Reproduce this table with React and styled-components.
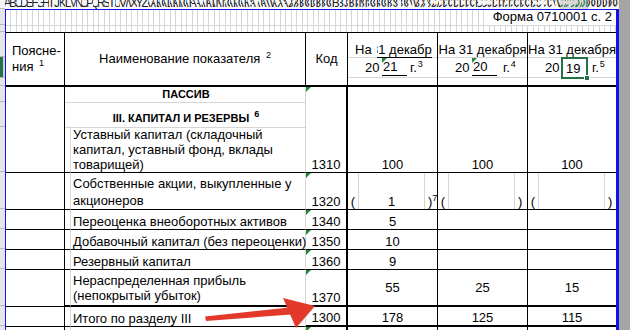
import React from "react";
import styled, { createGlobalStyle } from "styled-components";

const BLUE = "#1212e6";
const GRID = "#d6d6d6";
const GREEN = "#217346";
const MARK = "#1f8b3b";

const GlobalStyle = createGlobalStyle`
  html, body { margin: 0; padding: 0; background: #fff; }
  body { font-family: "Liberation Sans", Arial, sans-serif; }
`;

const line = (k) =>
  ({
    black: "1px solid #000",
    thick: "2px solid #000",
    grid: `1px solid ${GRID}`,
    none: "none",
  }[k || "black"]);

const Window = styled.div`
  position: relative;
  display: flex;
  width: 630px;
  height: 330px;
  overflow: hidden;
  background: #fff;
  color: #000;
  font-size: 13px;
`;

const RowHeads = styled.div`
  flex: none;
  width: 5px;
  display: flex;
  flex-direction: column;
  background: #e6e6e6;
`;

const RowHead = styled.div`
  flex: none;
  height: ${(p) => p.$h}px;
  box-sizing: border-box;
  border-bottom: 1px solid #b9b9b9;
  background: ${(p) => (p.$corner ? "#f3f3f3" : p.$active ? "#d2d2d2" : "#e6e6e6")};
  box-shadow: ${(p) => (p.$active ? `inset 3px 0 0 ${GREEN}` : "none")};
`;

const Main = styled.div`
  flex: none;
  width: 614px;
  display: flex;
  flex-direction: column;
`;

const ColHeads = styled.div`
  flex: none;
  height: 9px;
  display: flex;
  overflow: hidden;
  background: #f7f7f7;
`;

const ColHead = styled.div`
  flex: none;
  width: ${(p) => p.$w}px;
  display: flex;
  justify-content: center;
  overflow: hidden;
  font-size: 12px;
  line-height: 12px;
  color: ${(p) => (p.$active ? GREEN : "#222")};
  background: ${(p) => (p.$active ? "#d9d9d9" : "transparent")};

  span {
    margin-top: -3px;
    white-space: nowrap;
  }
`;

const Gutter = styled.div`
  flex: 1;
  background: #a5a5a5;
`;

const Sheet = styled.div`
  flex: 1;
  display: flex;
  flex-direction: column;
  border-top: 1px solid ${BLUE};
  border-left: 1px solid ${BLUE};
  border-right: 3px solid ${BLUE};
`;

const TopArea = styled.div`
  flex: none;
  height: 22px;
  display: flex;
  justify-content: flex-end;
  align-items: flex-start;
  background-image: linear-gradient(${GRID}, ${GRID}),
    repeating-linear-gradient(
      to right,
      transparent 0 4px,
      ${GRID} 4px 5px,
      transparent 5px 10px,
      ${GRID} 10px 11px
    );
  background-size: 100% 1px, auto;
  background-position: 0 15px, 0 0;
  background-repeat: no-repeat, repeat;
`;

const FormLabel = styled.div`
  height: 15px;
  line-height: 13px;
  padding: 0 4px 0 6px;
  background: #fff;
  white-space: nowrap;
`;

const Table = styled.div`
  display: grid;
  grid-template-columns: 59px 6px 235px 42px 90px 90px 88px;
  grid-template-rows: 54px 16px 25px 45px 37px 20px 20px 20px 37px 20px 20px;
  border-top: 1px solid #000;
`;

const Cell = styled.div`
  grid-column: span ${(p) => p.$cols || 1};
  grid-row: span ${(p) => p.$rows || 1};
  position: relative;
  box-sizing: border-box;
  min-width: 0;
  display: flex;
  flex-direction: column;
  justify-content: ${(p) =>
    ({ top: "flex-start", middle: "center", bottom: "flex-end" }[p.$v || "bottom"])};
  text-align: ${(p) => p.$align || "left"};
  line-height: ${(p) => p.$lh || 15}px;
  white-space: nowrap;
  border-right: ${(p) => line(p.$r)};
  border-bottom: ${(p) => line(p.$b)};
  background: #fff;
`;

const HeadCell = styled(Cell)`
  padding-left: ${(p) => p.$indent || 0}px;
`;

const NameCell = styled(Cell)`
  padding: 0 0 ${(p) => p.$padB || 0}px 2px;
  font-weight: ${(p) => (p.$bold ? 700 : 400)};
  font-size: ${(p) => (p.$bold ? 11 : 13)}px;
`;

const CodeCell = styled(Cell)`
  text-align: center;
`;

const ValueCell = styled(Cell)`
  text-align: center;
`;

const ParenCell = styled(Cell)`
  flex-direction: row;
  align-items: stretch;
`;

const ParenPart = styled.div`
  flex: ${(p) => (p.$grow ? 1 : "none")};
  width: ${(p) => (p.$grow ? "auto" : `${p.$w}px`)};
  box-sizing: border-box;
  display: flex;
  align-items: flex-end;
  justify-content: ${(p) => p.$justify || "center"};
  padding-left: ${(p) => p.$pl || 0}px;
  border-left: ${(p) => (p.$side === "left" ? line("grid") : "none")};
  border-right: ${(p) => (p.$side === "right" ? line("grid") : "none")};
`;

const Marker = styled.i`
  position: absolute;
  top: 0;
  left: 0;
  width: 0;
  height: 0;
  border-top: 5px solid ${MARK};
  border-right: 5px solid transparent;
`;

const Sup = styled.sup`
  font-size: 9px;
  line-height: 0;
  vertical-align: 5px;
  margin-left: ${(p) => (p.$gap === undefined ? 1 : p.$gap)}px;
`;

const DateLine = styled.div`
  flex: none;
  height: 25px;
  box-sizing: border-box;
  display: flex;
  align-items: flex-end;
  justify-content: ${(p) => (p.$center ? "center" : "flex-start")};
  padding-left: ${(p) => (p.$center ? 0 : 7)}px;
  border-bottom: 1px solid ${GRID};
`;

const OnWord = styled.span`
  flex: none;
  width: 22px;
`;

const ClipBox = styled.span`
  flex: none;
  width: 55px;
  display: flex;
  overflow: hidden;
  border-bottom: 1px solid #000;
  margin-bottom: -1px;

  span {
    flex: none;
    margin-left: -6px;
  }
`;

const YearLine = styled.div`
  flex: none;
  height: 20px;
  box-sizing: border-box;
  display: flex;
  align-items: stretch;
  padding-left: 17px;
  border-bottom: 1px solid ${GRID};
`;

const YearPrefix = styled.span`
  width: ${(p) => p.$w}px;
  display: flex;
  align-items: center;
`;

const YearBox = styled.span`
  position: relative;
  width: ${(p) => p.$w}px;
  box-sizing: border-box;
  display: flex;
  align-items: center;
  padding-left: ${(p) => (p.$selected ? 3 : 1)}px;
  border: ${(p) => (p.$selected ? `2px solid ${GREEN}` : "none")};
  border-bottom: ${(p) => (p.$selected ? `2px solid ${GREEN}` : "1px solid #000")};
  margin: ${(p) => (p.$selected ? "-1px 0 -2px" : "0 0 1px")};

  &::after {
    content: "";
    display: ${(p) => (p.$selected ? "block" : "none")};
    position: absolute;
    right: -4px;
    bottom: -4px;
    width: 4px;
    height: 4px;
    background: ${GREEN};
    border: 1px solid #fff;
  }
`;

const YearSuffix = styled.span`
  display: flex;
  align-items: center;
  padding-left: ${(p) => p.$gap}px;
`;

const ArrowLayer = styled.svg`
  position: absolute;
  left: 0;
  top: 0;
  pointer-events: none;
`;

const colName = (i) => {
  let s = "";
  let n = i + 1;
  while (n > 0) {
    const m = (n - 1) % 26;
    s = String.fromCharCode(65 + m) + s;
    n = Math.floor((n - 1) / 26);
  }
  return s;
};

const colHeads = [];
for (let i = 0, x = 5; x < 619; i++) {
  const w = i % 2 ? 6 : 5;
  colHeads.push({ label: colName(i), w, active: x >= 559 && x + w <= 590 });
  x += w;
}

const rowHeads = [
  { h: 16 }, { h: 7 }, { h: 25 }, { h: 21, active: true }, { h: 8 },
  { h: 16 }, { h: 25 }, { h: 45 }, { h: 37 }, { h: 20 }, { h: 20 },
  { h: 20 }, { h: 37 }, { h: 20 }, { h: 20 },
];

const dates = [
  { year: "21", clipped: true, note: "3", gap: 3, box: 25, mark: true },
  { year: "20", note: "4", gap: 6, box: 25, mark: true },
  { year: "19", note: "5", gap: 4, box: 27, selected: true },
];

const items = [
  {
    name: "Собственные акции, выкупленные у\nакционеров",
    code: "1320",
    lh: 17,
    paren: true,
  },
  { name: "Переоценка внеоборотных активов", code: "1340", values: ["5", "", ""] },
  { name: "Добавочный капитал (без переоценки)", code: "1350", values: ["10", "", ""] },
  { name: "Резервный капитал", code: "1360", values: ["9", "", ""] },
  {
    name: "Нераспределенная прибыль\n(непокрытый убыток)",
    code: "1370",
    values: ["55", "25", "15"],
    middle: true,
    bottom: "thick",
  },
  {
    name: "Итого по разделу III",
    code: "1300",
    values: ["178", "125", "115"],
    bottom: "thick",
    nameBottom: "black",
  },
  { name: "", code: "", values: ["", "", ""] },
];

const withBreaks = (text) =>
  text.split("\n").map((part, i) => (
    <React.Fragment key={i}>
      {i > 0 && <br />}
      {part}
    </React.Fragment>
  ));

const DateHead = ({ d, last }) => (
  <HeadCell $v="top" $b="thick" $r={last ? "none" : "black"}>
    {d.clipped ? (
      <DateLine>
        <OnWord>На</OnWord>
        <ClipBox>
          <span>31 декабря</span>
        </ClipBox>
      </DateLine>
    ) : (
      <DateLine $center>На 31 декабря</DateLine>
    )}
    <YearLine>
      <YearPrefix $w={d.selected ? 16 : 17}>20</YearPrefix>
      <YearBox $w={d.box} $selected={d.selected}>
        {d.mark && <Marker />}
        {d.year}
      </YearBox>
      <YearSuffix $gap={d.gap}>
        <span>
          г.<Sup>{d.note}</Sup>
        </span>
      </YearSuffix>
    </YearLine>
  </HeadCell>
);

const Parens = ({ value, note, last }) => (
  <ParenCell $r={last ? "none" : "black"}>
    <ParenPart $w={11} $side="right">(</ParenPart>
    <ParenPart $grow>{value}</ParenPart>
    <ParenPart $w={last ? 12 : 13} $side="left" $justify="flex-start" $pl={3}>
      <span>
        ){note && <Sup $gap={0}>{note}</Sup>}
      </span>
    </ParenPart>
  </ParenCell>
);

export default function App() {
  return (
    <>
      <GlobalStyle />
      <Window>
        <RowHeads>
          <RowHead $h={9} $corner />
          {rowHeads.map((r, i) => (
            <RowHead key={i} $h={r.h} $active={r.active} />
          ))}
        </RowHeads>

        <Main>
          <ColHeads>
            {colHeads.map((c, i) => (
              <ColHead key={i} $w={c.w} $active={c.active}>
                <span>{c.label}</span>
              </ColHead>
            ))}
          </ColHeads>

          <Sheet>
            <TopArea>
              <FormLabel>Форма 0710001 с. 2</FormLabel>
            </TopArea>

            <Table>
              <HeadCell $v="middle" $lh={16} $indent={6} $b="thick">
                Поясне-
                <br />
                <span>
                  ния <Sup $gap={2}>1</Sup>
                </span>
              </HeadCell>
              <HeadCell $cols={2} $v="middle" $lh={16} $align="center" $b="thick">
                <span>
                  Наименование показателя <Sup $gap={2}>2</Sup>
                </span>
              </HeadCell>
              <HeadCell $v="middle" $lh={16} $align="center" $b="thick">
                Код
              </HeadCell>
              {dates.map((d, i) => (
                <DateHead key={i} d={d} last={i === dates.length - 1} />
              ))}

              <Cell $rows={3} />
              <NameCell $cols={2} $bold $align="center" $v="middle" $r="grid" $b="grid">
                ПАССИВ
              </NameCell>
              <CodeCell $rows={3} $r="thick">
                <Marker />
                1310
              </CodeCell>
              <ValueCell $rows={3}>100</ValueCell>
              <ValueCell $rows={3}>100</ValueCell>
              <ValueCell $rows={3} $r="none">
                100
              </ValueCell>
              <NameCell $cols={2} $bold $align="center" $padB={1} $r="grid" $b="grid">
                <span>
                  III. КАПИТАЛ И РЕЗЕРВЫ <Sup $gap={2}>6</Sup>
                </span>
              </NameCell>
              <Cell $r="grid" />
              <NameCell $r="grid">
                Уставный капитал (складочный
                <br />
                капитал, уставный фонд, вклады
                <br />
                товарищей)
              </NameCell>

              {items.map((it, i) => (
                <React.Fragment key={it.code || i}>
                  <Cell />
                  <Cell $r="grid" $b={it.nameBottom || it.bottom} />
                  <NameCell
                    $r="grid"
                    $b={it.nameBottom || it.bottom}
                    $lh={it.lh}
                    $v={it.middle ? "middle" : "bottom"}
                  >
                    {withBreaks(it.name)}
                  </NameCell>
                  <CodeCell $r="thick" $b={it.bottom}>
                    {it.code !== "1300" && <Marker />}
                    {it.code}
                  </CodeCell>
                  {it.paren ? (
                    <>
                      <Parens value="1" note="7" />
                      <Parens value="" />
                      <Parens value="" last />
                    </>
                  ) : (
                    it.values.map((v, j) => (
                      <ValueCell
                        key={j}
                        $b={it.bottom}
                        $r={j === 2 ? "none" : "black"}
                        $v={it.middle ? "middle" : "bottom"}
                      >
                        {v}
                      </ValueCell>
                    ))
                  )}
                </React.Fragment>
              ))}
            </Table>
          </Sheet>
        </Main>

        <Gutter />

        <ArrowLayer width="630" height="330" viewBox="0 0 630 330">
          <polygon points="205,316.5 289,307.5 291,314.5 206,321" fill="#e2392b" />
          <polygon points="283,298 315,306 296,328" fill="#e2392b" />
        </ArrowLayer>
      </Window>
    </>
  );
}
